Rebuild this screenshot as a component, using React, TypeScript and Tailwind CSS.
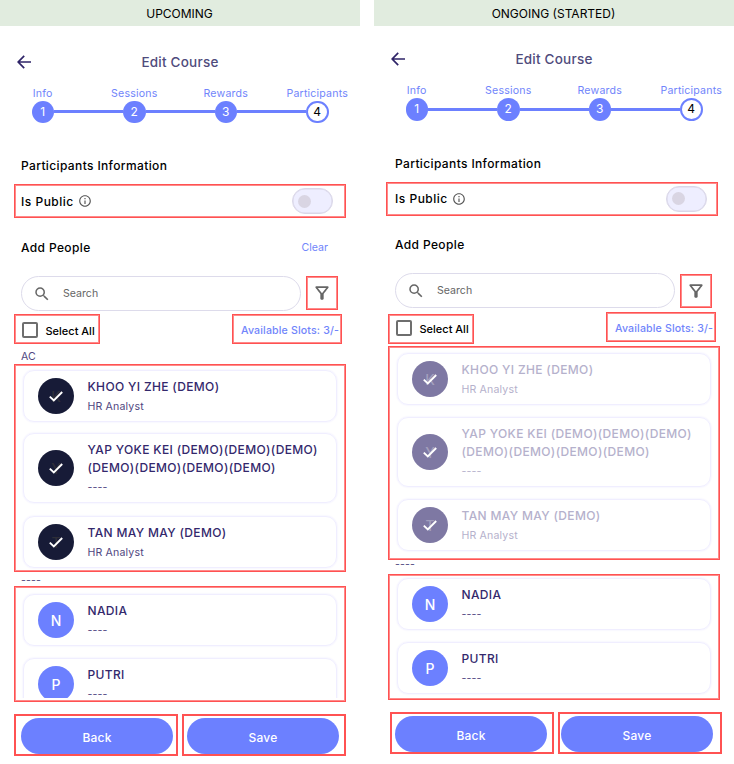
import type { ReactNode } from "react";
import { MdOutlineInfo, MdSearch, MdOutlineFilterAlt } from "react-icons/md";

const font = "font-['Inter','Liberation_Sans',sans-serif]";

function Mark({ className, children }: { className: string; children?: ReactNode }) {
  return (
    <div className={`shrink-0 border border-[#ff5252] shadow-[inset_0_0_0_1px_#ff8a8a] ${className}`}>
      {children}
    </div>
  );
}

function Banner({ children }: { children: ReactNode }) {
  return (
    <div className="flex h-[26px] shrink-0 items-center justify-center bg-[#e1ecdf] pt-[2px] pr-[1px] text-[12px] text-black">
      {children}
    </div>
  );
}

function TitleBar() {
  return (
    <div className="grid h-6 shrink-0 grid-cols-[50px_1fr_50px] items-center">
      <svg className="mb-px ml-[17px] h-[14px] w-[14px]" viewBox="0 0 14 14" fill="none" stroke="#2f2468" strokeWidth="1.7">
        <path d="M14 7H1.4M7.2 0.8L1.2 7L7.2 13.2" />
      </svg>
      <h1 className="text-center text-[13.5px] leading-6 font-medium tracking-[0.22px] text-[#4f4b7c]">Edit Course</h1>
    </div>
  );
}

function Stepper() {
  const steps = ["Info", "Sessions", "Rewards", "Participants"];
  return (
    <div className="ml-[-3px] grid w-[366px] shrink-0 grid-cols-4">
      {steps.map((s, i) => (
        <div key={s} className="flex flex-col items-center">
          <span className="h-[15px] pt-px text-[10.6px] leading-[14px] tracking-[0.18px] text-[#7185fb]">{s}</span>
          <div className="flex w-full items-center">
            <span className={`h-[3px] flex-1 ${i === 0 ? "" : "bg-[#6c80ff]"}`} />
            <span
              className={`flex size-[22.5px] items-center justify-center rounded-full text-[12px] ${
                i === 3 ? "border-2 border-[#6c80ff] bg-white text-black" : "bg-[#6c80ff] text-white"
              }`}
            >
              {i + 1}
            </span>
            <span className={`h-[3px] flex-1 ${i === 3 ? "" : "bg-[#6c80ff]"}`} />
          </div>
        </div>
      ))}
    </div>
  );
}

function Heading({ children }: { children: ReactNode }) {
  return <h2 className="text-[12px] leading-4 font-medium tracking-[0.37px] text-black">{children}</h2>;
}

function PublicRow() {
  return (
    <>
      <span className="pt-px text-[12px] leading-4 font-medium tracking-[0.5px] text-black">Is Public</span>
      <MdOutlineInfo className="ml-[4px] size-[14px] text-[#555]" />
      <span className="ml-auto flex h-[26px] w-[41px] items-center rounded-full border border-[#dad7e8] bg-[#eeeeff] pl-[5px] shadow-[inset_0_0_0_0.5px_#dad7e8]">
        <span className="size-[13px] rounded-full bg-[#d9d5e3]" />
      </span>
    </>
  );
}

function SearchField() {
  return (
    <div className="flex h-[35px] w-[280px] items-center rounded-full border border-[#dddbeb] pl-[11px]">
      <MdSearch className="size-[18px] text-[#666]" />
      <span className="ml-3 text-[10.6px] leading-4 text-[#666]">Search</span>
    </div>
  );
}

function SelectAll() {
  return (
    <>
      <span className="size-4 rounded-[2px] border-2 border-[#6e6e6e]" />
      <span className="ml-[7.5px] pt-[2px] text-[11px] leading-4 font-medium text-black">Select All</span>
    </>
  );
}

function Slots() {
  return (
    <span className="pt-[2px] text-[10.6px] leading-4 font-medium tracking-[0.15px] whitespace-nowrap text-[#7185fb]">
      Available Slots: 3/-
    </span>
  );
}

type Person = { name: string[]; role: string; initial: string; state: "picked" | "locked" | "open" };

function PersonCard({ name, role, initial, state }: Person) {
  const tone = { picked: "bg-[#171b37]", locked: "bg-[#7e78a3]", open: "bg-[#6c80ff]" }[state];
  const letter = { picked: "text-[#2e2e38]", locked: "text-[#a39fbd]", open: "text-white" }[state];
  const text = state === "locked" ? "text-[#b5b1cc]" : "text-[#33286c]";
  const sub = state === "locked" ? "text-[#b5b1cc]" : "text-[#50477f]";
  return (
    <div
      className={`flex w-[314px] shrink-0 items-center rounded-[11px] border border-[#f0eeff] pl-[14px] shadow-[0_0_2px_#e9e6ff] ${
        name.length > 1 ? "h-[70px]" : "h-[52px]"
      }`}
    >
      <div className={`grid size-[36px] shrink-0 place-items-center rounded-full text-[14px] font-medium ${tone}`}>
        <span className={`col-start-1 row-start-1 ${letter}`}>{initial}</span>
        {state !== "open" && (
          <svg className="col-start-1 row-start-1 h-[11px] w-[14px]" viewBox="0 0 14 11" fill="none" stroke="#fff" strokeWidth="1.9">
            <path d="M0.8 5.6L4.8 9.5L13.2 1" />
          </svg>
        )}
      </div>
      <div className="ml-[13.5px] flex flex-col">
        {name.map((n) => (
          <span key={n} className={`text-[12px] leading-[18px] font-medium tracking-[0.35px] whitespace-nowrap ${text}`}>
            {n}
          </span>
        ))}
        <span className={`mt-[7px] mb-[4px] text-[10.6px] leading-[8px] tracking-[0.15px] ${sub}`}>{role}</span>
      </div>
    </div>
  );
}

const khoo = { name: ["KHOO YI ZHE (DEMO)"], role: "HR Analyst", initial: "K" };
const yap = { name: ["YAP YOKE KEI (DEMO)(DEMO)(DEMO)", "(DEMO)(DEMO)(DEMO)(DEMO)"], role: "----", initial: "Y" };
const tan = { name: ["TAN MAY MAY (DEMO)"], role: "HR Analyst", initial: "T" };
const nadia = { name: ["NADIA"], role: "----", initial: "N" };
const putri = { name: ["PUTRI"], role: "----", initial: "P" };

function ActionButton({ children, className }: { children: ReactNode; className: string }) {
  return (
    <div className={`h-[42px] w-[164px] border-2 border-[#ff5252] pt-[2px] ${className}`}>
      <button className="block h-9 w-[152px] rounded-full bg-[#6c80ff] pt-px text-[12px] leading-[37px] font-medium tracking-[0.2px] text-white">
        {children}
      </button>
    </div>
  );
}

function GroupLabel({ children, className }: { children: ReactNode; className: string }) {
  return <div className={`shrink-0 pl-[21px] text-[10.6px] tracking-[0.15px] text-[#50477f] ${className}`}>{children}</div>;
}

function UpcomingScreen() {
  return (
    <section className="flex h-[764px] w-[360px] flex-col overflow-hidden">
      <Banner>UPCOMING</Banner>
      <div className="h-6 shrink-0" />
      <TitleBar />
      <div className="h-[11.5px] shrink-0" />
      <Stepper />
      <div className="mt-[35px] pl-[21px]">
        <Heading>Participants Information</Heading>
      </div>
      <Mark className="mt-[10px] ml-[14px] flex h-[34px] w-[332px] items-center pr-3 pl-[6px]">
        <PublicRow />
      </Mark>
      <div className="mt-[21px] flex items-center justify-between pr-8 pl-[21px]">
        <Heading>Add People</Heading>
        <span className="pt-px text-[10.6px] leading-4 text-[#7185fb]">Clear</span>
      </div>
      <div className="mt-[20px] flex pl-[21px]">
        <SearchField />
        <Mark className="ml-[5px] flex h-[34px] w-8 items-center justify-center pr-px">
          <MdOutlineFilterAlt className="size-5 text-[#666]" />
        </Mark>
      </div>
      <div className="mt-[3px] flex shrink-0 pl-[14px]">
        <Mark className="flex h-[30px] w-[86px] items-center pt-px pl-[7px]">
          <SelectAll />
        </Mark>
        <Mark className="ml-[132px] flex h-[30px] w-[110px] items-center pt-px pl-2">
          <Slots />
        </Mark>
      </div>
      <GroupLabel className="h-5 pt-[5px] leading-4">AC</GroupLabel>
      <Mark className="ml-[14px] flex h-[208px] w-[332px] flex-col justify-between pt-[5px] pb-[3px] pl-[8px]">
        <div className="flex flex-col gap-[11px]">
          <PersonCard {...khoo} state="picked" />
          <PersonCard {...yap} state="picked" />
        </div>
        <PersonCard {...tan} state="picked" />
      </Mark>
      <GroupLabel className="h-[14px] leading-[18px]">----</GroupLabel>
      <Mark className="ml-[14px] h-[116px] w-[332px] pl-[6px]">
        <div className="flex h-[111px] w-[318px] flex-col gap-3 overflow-hidden pt-[7px] pl-[2px]">
          <PersonCard {...nadia} state="open" />
          <PersonCard {...putri} state="open" />
        </div>
      </Mark>
      <div className="mt-3 flex gap-1 pl-[14px]">
        <ActionButton className="pl-[5px]">Back</ActionButton>
        <ActionButton className="pl-[3px]">Save</ActionButton>
      </div>
    </section>
  );
}

function OngoingScreen() {
  return (
    <section className="flex h-[764px] w-[360px] flex-col overflow-hidden">
      <Banner>ONGOING (STARTED)</Banner>
      <div className="h-[21px] shrink-0" />
      <TitleBar />
      <div className="h-[12px] shrink-0" />
      <Stepper />
      <div className="mt-[35.5px] pl-[21px]">
        <Heading>Participants Information</Heading>
      </div>
      <Mark className="mt-[10px] ml-[12px] flex h-[34px] w-[332px] items-center pr-[10px] pb-px pl-[8px]">
        <PublicRow />
      </Mark>
      <div className="mt-[21px] pl-[21px]">
        <Heading>Add People</Heading>
      </div>
      <div className="mt-[20px] flex pl-[21px]">
        <SearchField />
        <Mark className="mt-px ml-[5px] flex h-[34px] w-8 items-center justify-center pr-px">
          <MdOutlineFilterAlt className="size-5 text-[#666]" />
        </Mark>
      </div>
      <div className="mt-[4px] flex h-[34px] shrink-0 items-start pl-[14px]">
        <Mark className="mt-[2px] flex h-[30px] w-[86px] items-center pb-[3px] pl-[7px]">
          <SelectAll />
        </Mark>
        <Mark className="ml-[132px] flex h-[30px] w-[110px] items-center pt-px pl-2">
          <Slots />
        </Mark>
      </div>
      <Mark className="ml-[14px] flex h-[214px] w-[332px] flex-col gap-3 pt-[6px] pl-[8px]">
        <PersonCard {...khoo} state="locked" />
        <PersonCard {...yap} state="locked" />
        <PersonCard {...tan} state="locked" />
      </Mark>
      <GroupLabel className="h-[14px] leading-[9px]">----</GroupLabel>
      <Mark className="ml-[14px] flex h-[126px] w-[332px] flex-col gap-3 pt-[3px] pl-[8px]">
        <PersonCard {...nadia} state="open" />
        <PersonCard {...putri} state="open" />
      </Mark>
      <div className="mt-3 flex gap-1 pl-[16px]">
        <ActionButton className="pl-[3px]">Back</ActionButton>
        <ActionButton className="pl-[1px]">Save</ActionButton>
      </div>
    </section>
  );
}

export default function App() {
  return (
    <main className={`flex h-[764px] w-[734px] gap-[14px] overflow-hidden bg-white ${font}`}>
      <UpcomingScreen />
      <OngoingScreen />
    </main>
  );
}
